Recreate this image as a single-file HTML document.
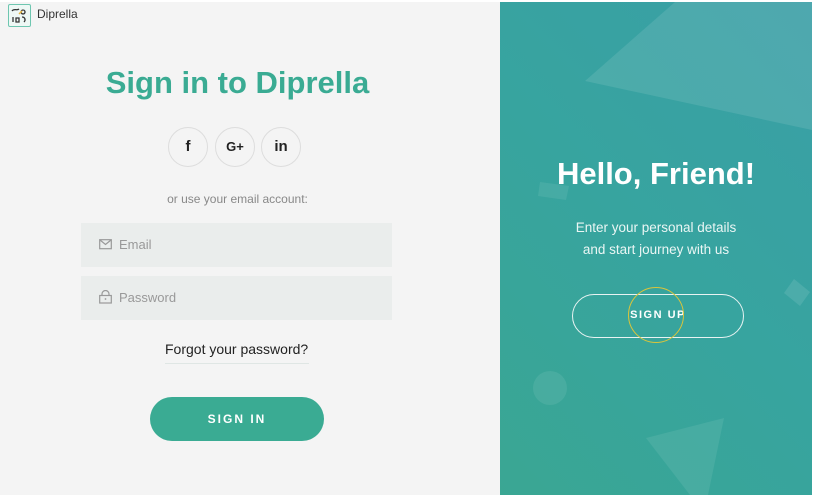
<!DOCTYPE html>
<html><head><meta charset="utf-8"><style>
*{margin:0;padding:0;box-sizing:border-box}
body{width:813px;height:495px;background:#fff;position:relative;overflow:hidden;font-family:"Liberation Sans",sans-serif}
.left{position:absolute;left:0;top:2px;width:500px;height:493px;background:#f4f4f4}
.right{position:absolute;left:500px;top:2px;width:312px;height:493px;background:linear-gradient(225deg,#3a9fa6 0%,#37a49f 50%,#3aa693 100%);overflow:hidden}
.abs{position:absolute}
.title{position:absolute;left:0;width:475px;top:63px;text-align:center;color:#3aab93;font-weight:bold;font-size:31px}
.circ{position:absolute;top:125px;width:40px;height:40px;border:1px solid #ddd;border-radius:50%;text-align:center;line-height:38px;font-weight:bold;color:#222;font-size:15px}
.inp{position:absolute;left:81px;width:311px;height:44px;background:#eaedec;color:#999;font-size:13px;line-height:44px;padding-left:38px}
</style></head><body>
<div class="left">
 <div class="abs" style="left:8px;top:2px;width:23px;height:23px;border:1.5px solid #6ec6b0;border-radius:2px;background:#eef8f5">
  <svg width="20" height="20" viewBox="0 0 20 20"><path d="M3 6c2-3 5 0 7-2M4 12v5M7 13h3v4H7zM14 5a2 2 0 1 0 .1 0M13 12c3 0 4 3 2 5" stroke="#333" stroke-width="1.3" fill="none"/><path d="M10 9l3-3" stroke="#e8b640" stroke-width="1.5"/></svg>
 </div>
 <div class="abs" style="left:37px;top:5px;font-size:12px;color:#333">Diprella</div>
 <div class="title">Sign in to Diprella</div>
 <div class="circ" style="left:168px">f</div>
 <div class="circ" style="left:215px;font-size:13px">G+</div>
 <div class="circ" style="left:261px">in</div>
 <div class="abs" style="left:0;width:475px;top:190px;text-align:center;font-size:12px;color:#888">or use your email account:</div>
 <div class="inp" style="top:221px">Email
  <svg class="abs" style="left:18px;top:16px" width="13" height="11" viewBox="0 0 13 11"><rect x=".7" y=".7" width="11.6" height="9" fill="none" stroke="#999" stroke-width="1.2"/><path d="M1 1l5.5 4.5L12 1" fill="none" stroke="#999" stroke-width="1.2"/></svg></div>
 <div class="inp" style="top:274px">Password
  <svg class="abs" style="left:18px;top:14px" width="13" height="14" viewBox="0 0 13 14"><rect x=".7" y="5.5" width="11.6" height="7.5" fill="none" stroke="#999" stroke-width="1.2"/><path d="M3 5.5V4a3.5 3.5 0 0 1 7 0v1.5" fill="none" stroke="#999" stroke-width="1.2"/><circle cx="6.5" cy="9" r=".9" fill="#999"/></svg></div>
 <div class="abs" style="left:165px;top:339px;font-size:14px;color:#222">Forgot your password?</div>
 <div class="abs" style="left:165px;top:361px;width:144px;height:1px;background:#dfe6e4"></div>
 <div class="abs" style="left:150px;top:395px;width:174px;height:44px;border-radius:22px;background:#3aab93;color:#fff;text-align:center;line-height:44px;font-size:12px;font-weight:bold;letter-spacing:2px">SIGN IN</div>
</div>
<div class="right">
 <svg class="abs" style="left:0;top:0" width="312" height="493">
  <polygon points="85,79 175,0 312,0 312,128" fill="#fff" opacity=".1"/>
  <polygon points="146,436 224,416 208,493 190,493" fill="#fff" opacity=".08"/>
  <polygon points="40,180 69,184 66,198 38,194" fill="#fff" opacity=".08"/>
  <polygon points="294,277 310,290 300,304 284,291" fill="#fff" opacity=".1"/>
  <circle cx="50" cy="386" r="17" fill="#fff" opacity=".08"/>
 </svg>
 <div class="abs" style="left:0;width:312px;top:154px;text-align:center;color:#fff;font-weight:bold;font-size:31px">Hello, Friend!</div>
 <div class="abs" style="left:0;width:312px;top:215px;text-align:center;color:#eaf6f4;font-size:13.5px;line-height:22px">Enter your personal details<br>and start journey with us</div>
 <div class="abs" style="left:72px;top:292px;width:172px;height:44px;border:1.5px solid #e8f3f2;border-radius:22px;color:#fff;text-align:center;line-height:41px;font-size:11px;font-weight:bold;letter-spacing:1.5px">SIGN UP</div>
 <div class="abs" style="left:128px;top:285px;width:56px;height:56px;border:1.5px solid #d8c43c;border-radius:50%"></div>
</div>
</body></html>
